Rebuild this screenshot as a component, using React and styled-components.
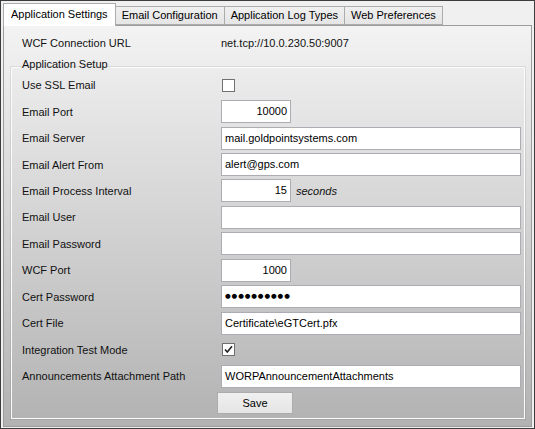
import { Fragment } from 'react'
import styled, { createGlobalStyle } from 'styled-components'

const GlobalStyle = createGlobalStyle`
  html, body {
    margin: 0;
    padding: 0;
    background: #f0f0f0;
  }
  body {
    font-family: "Liberation Sans", Arial, sans-serif;
    font-size: 11px;
    color: #111;
  }
`;

const Frame = styled.div`
  width: 535px;
  height: 429px;
  box-sizing: border-box;
  border: 1px solid #3c3c3c;
  background: #f0f0f0;
  padding: 2px 2px 1px 2px;
  display: flex;
  flex-direction: column;
`;

const TabStrip = styled.div`
  display: flex;
  align-items: flex-end;
  height: 22px;
  position: relative;
  z-index: 1;
`;

const Tab = styled.div`
  box-sizing: border-box;
  height: ${p => (p.$active ? '23px' : '19px')};
  margin-bottom: ${p => (p.$active ? '-1px' : '0')};
  margin-left: ${p => (p.$active ? '0' : '-1px')};
  padding: ${p => (p.$active ? '3px 7px 0 7px' : '1px 6px 0 6px')};
  border: 1px solid #acacac;
  border-bottom: ${p => (p.$active ? 'none' : '1px solid #acacac')};
  background: ${p => (p.$active ? '#fff' : 'linear-gradient(#f0f0f0, #e5e5e5)')};
  line-height: 15px;
  white-space: nowrap;
  color: #000;
  &:first-child {
    margin-left: 0;
  }
`;

const Panel = styled.div`
  flex: 1;
  box-sizing: border-box;
  border: 1px solid #9c9c9c;
  background: linear-gradient(to bottom, #f3f3f3 0%, #b2b2b2 100%);
  padding: 9px 6px 5px 7px;
  display: flex;
  flex-direction: column;
`;

const InfoRow = styled.div`
  display: grid;
  grid-template-columns: 199px 1fr;
  padding-left: 11px;
  line-height: 16px;
`;

const GroupBox = styled.fieldset`
  margin: 6px 0 0 0;
  padding: 0 2px 4px 10px;
  border: 1px solid #fbfbfb;
  box-shadow: 0 0 0 1px rgba(0, 0, 0, 0.08);
  min-width: 0;
`;

const GroupTitle = styled.legend`
  margin-left: -2px;
  padding: 0 2px 7px 2px;
  margin-bottom: -6px;
  line-height: 14px;
  color: #111;
`;

const FormGrid = styled.div`
  display: grid;
  grid-template-columns: 199px 1fr;
  grid-auto-rows: 26.45px;
  align-items: center;
`;

const Label = styled.div`
  white-space: nowrap;
`;

const ValueCell = styled.div`
  display: flex;
  align-items: center;
  gap: 5px;
`;

const Field = styled.div`
  box-sizing: border-box;
  width: ${p => (p.$short ? '70px' : '300px')};
  height: 23px;
  border: 1px solid #abadb3;
  background: #fff;
  padding: 0 3px;
  line-height: 21px;
  text-align: ${p => (p.$short ? 'right' : 'left')};
  white-space: nowrap;
  overflow: hidden;
  color: #000;
`;

const Dots = styled.span`
  font-family: "DejaVu Sans", sans-serif;
  font-size: 6.5px;
  letter-spacing: 0.9px;
  vertical-align: top;
`;

const Suffix = styled.span`
  font-style: italic;
`;

const CheckBox = styled.div`
  box-sizing: border-box;
  width: 13px;
  height: 13px;
  margin-left: 1px;
  border: 1px solid #707070;
  background: #fff;
  display: flex;
  align-items: center;
  justify-content: center;
`;

const SaveButton = styled.button`
  box-sizing: border-box;
  margin: 3px 0 0 195px;
  width: 76px;
  height: 22px;
  border: 1px solid #acacac;
  background: linear-gradient(#f0f0f0, #e5e5e5);
  font-family: inherit;
  font-size: 11px;
  color: #000;
  padding: 0;
`;

const tabs = ['Application Settings', 'Email Configuration', 'Application Log Types', 'Web Preferences'];

const rows = [
  { label: 'Use SSL Email', check: true, checked: false },
  { label: 'Email Port', value: '10000', short: true },
  { label: 'Email Server', value: 'mail.goldpointsystems.com' },
  { label: 'Email Alert From', value: 'alert@gps.com' },
  { label: 'Email Process Interval', value: '15', short: true, suffix: 'seconds' },
  { label: 'Email User', value: '' },
  { label: 'Email Password', value: '' },
  { label: 'WCF Port', value: '1000', short: true },
  { label: 'Cert Password', value: '●●●●●●●●●●', password: true },
  { label: 'Cert File', value: 'Certificate\\eGTCert.pfx' },
  { label: 'Integration Test Mode', check: true, checked: true },
  { label: 'Announcements Attachment Path', value: 'WORPAnnouncementAttachments' },
];

function Check({ checked }) {
  return (
    <CheckBox>
      {checked && (
        <svg width="9" height="9" viewBox="0 0 9 9">
          <path d="M1 4.5 L3.3 7 L8 1.2" fill="none" stroke="#222" strokeWidth="1.6" />
        </svg>
      )}
    </CheckBox>
  );
}

export default function App() {
  return (
    <>
      <GlobalStyle />
      <Frame>
        <TabStrip>
          {tabs.map((t, i) => (
            <Tab key={t} $active={i === 0}>{t}</Tab>
          ))}
        </TabStrip>
        <Panel>
          <InfoRow>
            <span>WCF Connection URL</span>
            <span>net.tcp://10.0.230.50:9007</span>
          </InfoRow>
          <GroupBox>
            <GroupTitle>Application Setup</GroupTitle>
            <FormGrid>
              {rows.map(r => (
                <Fragment key={r.label}>
                  <Label>{r.label}</Label>
                  <ValueCell>
                    {r.check ? (
                      <Check checked={r.checked} />
                    ) : (
                      <Field $short={r.short}>
                        {r.password ? <Dots>{r.value}</Dots> : r.value}
                      </Field>
                    )}
                    {r.suffix && <Suffix>{r.suffix}</Suffix>}
                  </ValueCell>
                </Fragment>
              ))}
            </FormGrid>
            <SaveButton>Save</SaveButton>
          </GroupBox>
        </Panel>
      </Frame>
    </>
  );
}
